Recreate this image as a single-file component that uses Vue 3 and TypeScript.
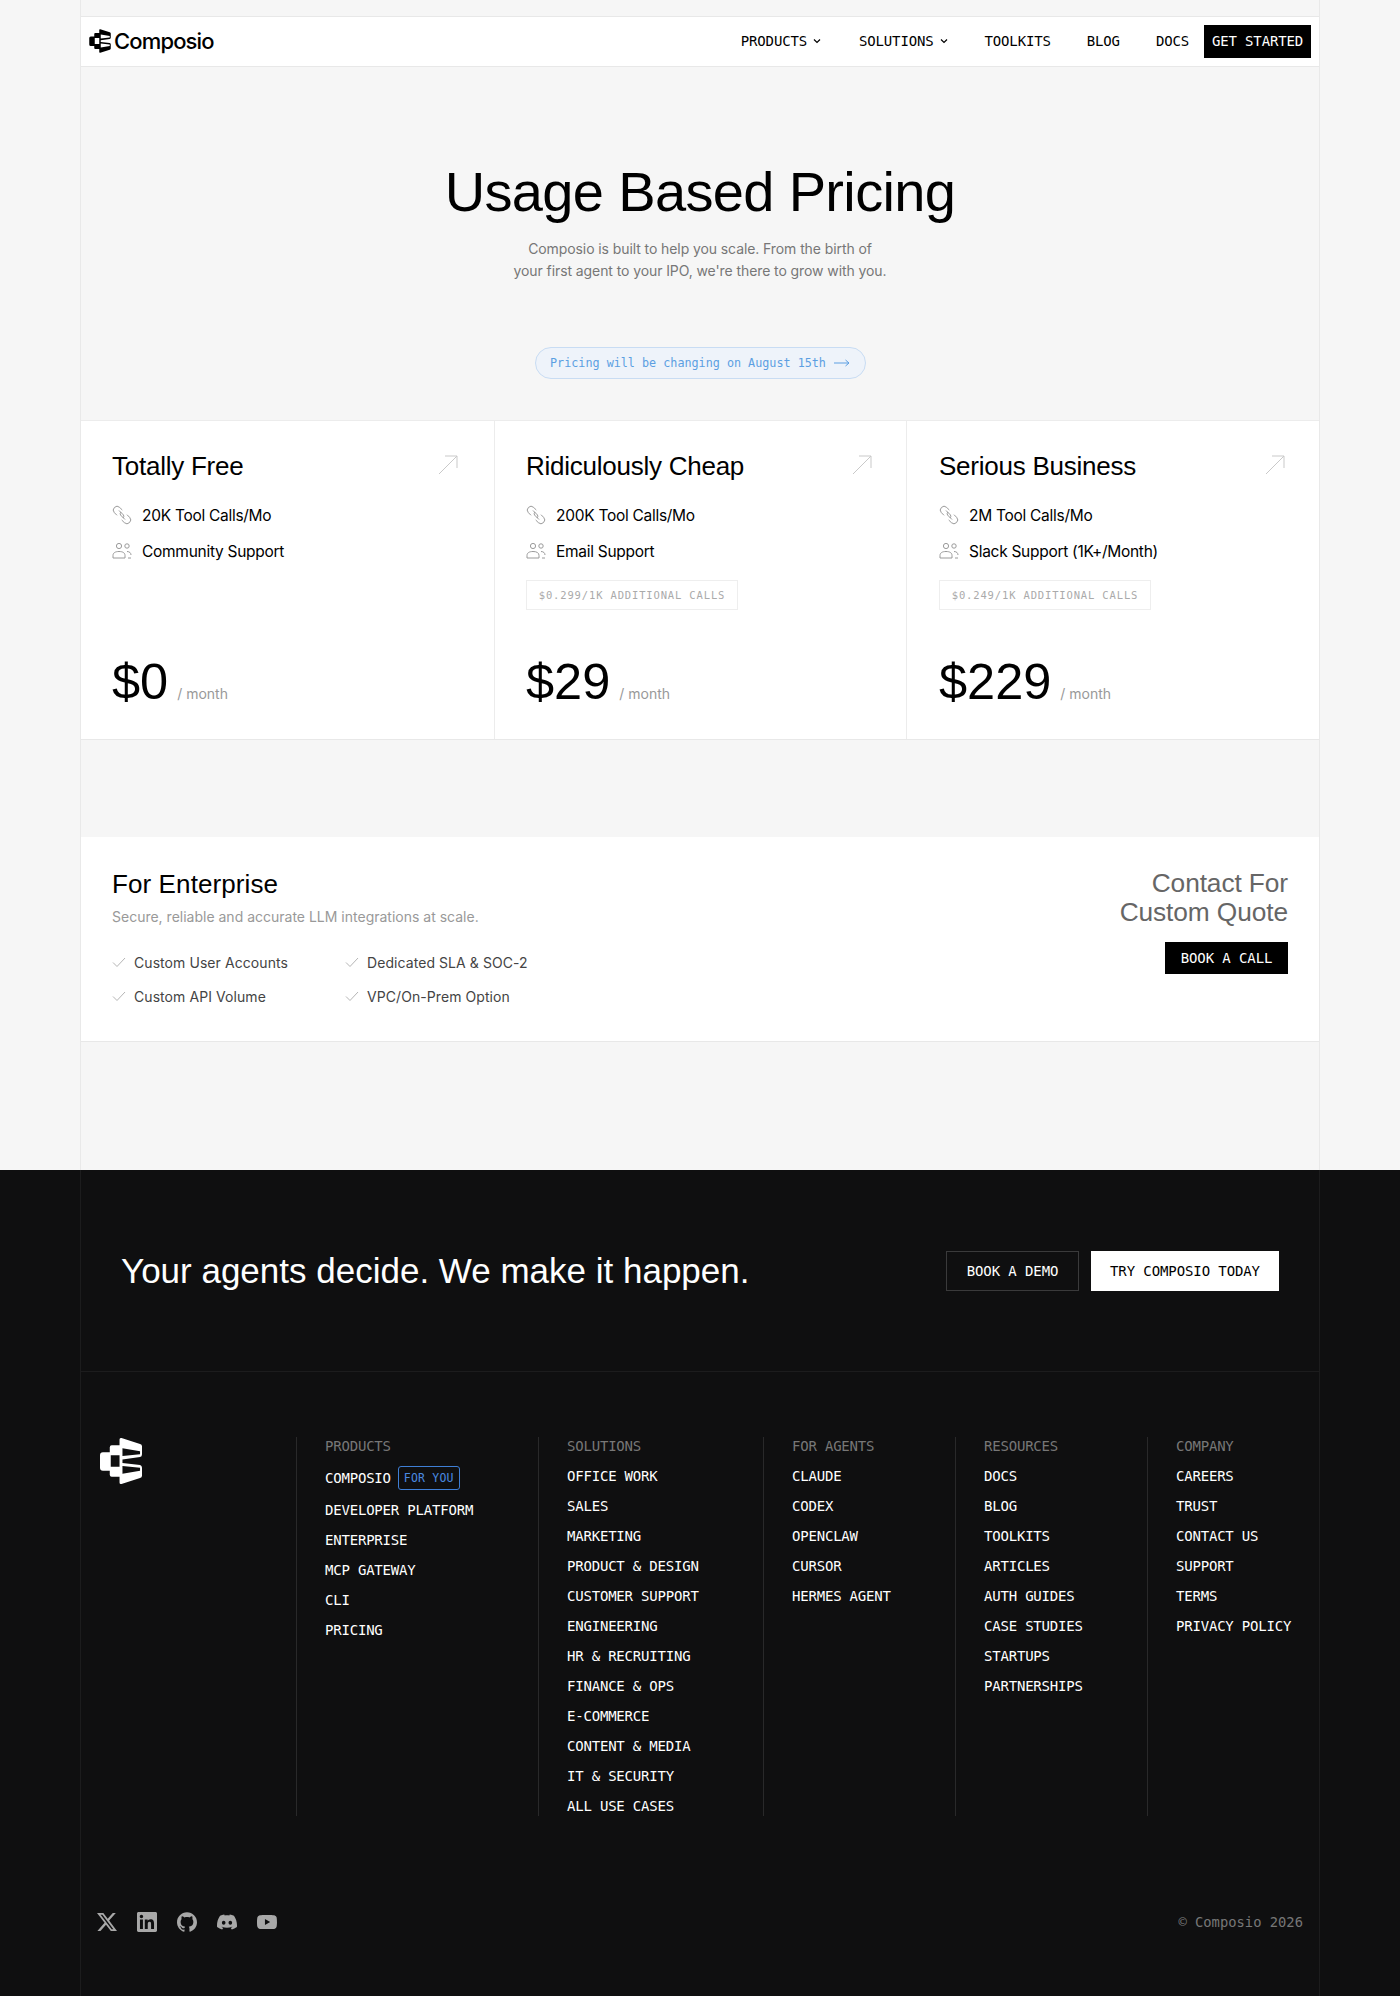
<script setup lang="ts">
interface Plan {
  name: string
  calls: string
  support: string
  extra?: string
  price: string
}

interface FooterColumn {
  title: string
  links: string[]
}

const logoPath =
  'M20 2Q20 0 22 .5L41 6.5Q43 7 43 9L43 17Q43 19.5 41 20L23 22.5V26L41 28Q43 28.5 43 31V39Q43 41 41 41.5L22 47.5Q20 48 20 46V40H12Q10 40 10 38V34H3Q0 34 0 31V18Q0 15 3 15H10V10Q10 8 12 8H20ZM11 18H20V30H11ZM23 11L41 14V17L23 19ZM23 29L41 31V34L23 37Z'

const plans: Plan[] = [
  { name: 'Totally Free', calls: '20K Tool Calls/Mo', support: 'Community Support', price: '$0' },
  {
    name: 'Ridiculously Cheap',
    calls: '200K Tool Calls/Mo',
    support: 'Email Support',
    extra: '$0.299/1K ADDITIONAL CALLS',
    price: '$29',
  },
  {
    name: 'Serious Business',
    calls: '2M Tool Calls/Mo',
    support: 'Slack Support (1K+/Month)',
    extra: '$0.249/1K ADDITIONAL CALLS',
    price: '$229',
  },
]

const enterpriseFeatures = [
  'Custom User Accounts',
  'Dedicated SLA & SOC-2',
  'Custom API Volume',
  'VPC/On-Prem Option',
]

const columns: FooterColumn[] = [
  {
    title: 'SOLUTIONS',
    links: [
      'OFFICE WORK',
      'SALES',
      'MARKETING',
      'PRODUCT & DESIGN',
      'CUSTOMER SUPPORT',
      'ENGINEERING',
      'HR & RECRUITING',
      'FINANCE & OPS',
      'E-COMMERCE',
      'CONTENT & MEDIA',
      'IT & SECURITY',
      'ALL USE CASES',
    ],
  },
  { title: 'FOR AGENTS', links: ['CLAUDE', 'CODEX', 'OPENCLAW', 'CURSOR', 'HERMES AGENT'] },
  {
    title: 'RESOURCES',
    links: ['DOCS', 'BLOG', 'TOOLKITS', 'ARTICLES', 'AUTH GUIDES', 'CASE STUDIES', 'STARTUPS', 'PARTNERSHIPS'],
  },
  { title: 'COMPANY', links: ['CAREERS', 'TRUST', 'CONTACT US', 'SUPPORT', 'TERMS', 'PRIVACY POLICY'] },
]

const productLinks = ['DEVELOPER PLATFORM', 'ENTERPRISE', 'MCP GATEWAY', 'CLI', 'PRICING']

const socials = [
  'M18.901 1.153h3.68l-8.04 9.19L24 22.846h-7.406l-5.8-7.584-6.638 7.584H.474l8.6-9.83L0 1.154h7.594l5.243 6.932ZM17.61 20.644h2.039L6.486 3.24H4.298Z',
  'M20.447 20.452h-3.554v-5.569c0-1.328-.027-3.037-1.852-3.037-1.853 0-2.136 1.445-2.136 2.939v5.667H9.351V9h3.414v1.561h.046c.477-.9 1.637-1.85 3.37-1.85 3.601 0 4.267 2.37 4.267 5.455v6.286zM5.337 7.433c-1.144 0-2.063-.926-2.063-2.065 0-1.138.92-2.063 2.063-2.063 1.14 0 2.064.925 2.064 2.063 0 1.139-.925 2.065-2.064 2.065zm1.782 13.019H3.555V9h3.564v11.452zM22.225 0H1.771C.792 0 0 .774 0 1.729v20.542C0 23.227.792 24 1.771 24h20.451C23.2 24 24 23.227 24 22.271V1.729C24 .774 23.2 0 22.222 0h.003z',
  'M12 .297c-6.63 0-12 5.373-12 12 0 5.303 3.438 9.8 8.205 11.385.6.113.82-.258.82-.577 0-.285-.01-1.04-.015-2.04-3.338.724-4.042-1.61-4.042-1.61C4.422 18.07 3.633 17.7 3.633 17.7c-1.087-.744.084-.729.084-.729 1.205.084 1.838 1.236 1.838 1.236 1.07 1.835 2.809 1.305 3.495.998.108-.776.417-1.305.76-1.605-2.665-.3-5.466-1.332-5.466-5.93 0-1.31.465-2.38 1.235-3.22-.135-.303-.54-1.523.105-3.176 0 0 1.005-.322 3.3 1.23.96-.267 1.98-.399 3-.405 1.02.006 2.04.138 3 .405 2.28-1.552 3.285-1.23 3.285-1.23.645 1.653.24 2.873.12 3.176.765.84 1.23 1.91 1.23 3.22 0 4.61-2.805 5.625-5.475 5.92.42.36.81 1.096.81 2.22 0 1.606-.015 2.896-.015 3.286 0 .315.21.69.825.57C20.565 22.092 24 17.592 24 12.297c0-6.627-5.373-12-12-12',
  'M20.317 4.3698a19.7913 19.7913 0 00-4.8851-1.5152.0741.0741 0 00-.0785.0371c-.211.3753-.4447.8648-.6083 1.2495-1.8447-.2762-3.68-.2762-5.4868 0-.1636-.3933-.4058-.8742-.6177-1.2495a.077.077 0 00-.0785-.037 19.7363 19.7363 0 00-4.8852 1.515.0699.0699 0 00-.0321.0277C.5334 9.0458-.319 13.5799.0992 18.0578a.0824.0824 0 00.0312.0561c2.0528 1.5076 4.0413 2.4228 5.9929 3.0294a.0777.0777 0 00.0842-.0276c.4616-.6304.8731-1.2952 1.226-1.9942a.076.076 0 00-.0416-.1057c-.6528-.2476-1.2743-.5495-1.8722-.8923a.077.077 0 01-.0076-.1277c.1258-.0943.2517-.1923.3718-.2914a.0743.0743 0 01.0776-.0105c3.9278 1.7933 8.18 1.7933 12.0614 0a.0739.0739 0 01.0785.0095c.1202.099.246.1981.3728.2924a.077.077 0 01-.0066.1276 12.2986 12.2986 0 01-1.873.8914.0766.0766 0 00-.0407.1067c.3604.698.7719 1.3628 1.225 1.9932a.076.076 0 00.0842.0286c1.961-.6067 3.9495-1.5219 6.0023-3.0294a.077.077 0 00.0313-.0552c.5004-5.177-.8382-9.6739-3.5485-13.6604a.061.061 0 00-.0312-.0286zM8.02 15.3312c-1.1825 0-2.1569-1.0857-2.1569-2.419 0-1.3332.9555-2.4189 2.157-2.4189 1.2108 0 2.1757 1.0952 2.1568 2.419 0 1.3332-.9555 2.4189-2.1569 2.4189zm7.9748 0c-1.1825 0-2.1569-1.0857-2.1569-2.419 0-1.3332.9554-2.4189 2.1569-2.4189 1.2108 0 2.1757 1.0952 2.1568 2.419 0 1.3332-.946 2.4189-2.1568 2.4189Z',
  'M23.498 6.186a3.016 3.016 0 0 0-2.122-2.136C19.505 3.545 12 3.545 12 3.545s-7.505 0-9.377.505A3.017 3.017 0 0 0 .502 6.186C0 8.07 0 12 0 12s0 3.93.502 5.814a3.016 3.016 0 0 0 2.122 2.136c1.871.505 9.376.505 9.376.505s7.505 0 9.377-.505a3.015 3.015 0 0 0 2.122-2.136C24 15.93 24 12 24 12s0-3.93-.502-5.814zM9.545 15.568V8.432L15.818 12l-6.273 3.568z',
]
</script>

<template>
  <div class="page">
    <div class="frame">
      <header class="nav">
        <div class="brand">
          <svg class="brand-mark" viewBox="0 0 43 48"><path :d="logoPath" fill="#000" fill-rule="evenodd" /></svg>
          <span class="brand-name">Composio</span>
        </div>
        <nav class="nav-links">
          <span class="nav-link">PRODUCTS<svg class="chev" viewBox="0 0 10 10"><path d="M2 3.5 5 6.5 8 3.5" /></svg></span>
          <span class="nav-link">SOLUTIONS<svg class="chev" viewBox="0 0 10 10"><path d="M2 3.5 5 6.5 8 3.5" /></svg></span>
          <span class="nav-link">TOOLKITS</span>
          <span class="nav-link">BLOG</span>
          <span class="nav-link">DOCS</span>
          <span class="nav-cta">GET STARTED</span>
        </nav>
      </header>

      <section class="hero">
        <h1 class="hero-title">Usage Based Pricing</h1>
        <p class="hero-sub">Composio is built to help you scale. From the birth of<br>your first agent to your IPO, we're there to grow with you.</p>
        <div class="notice">
          Pricing will be changing on August 15th
          <svg class="notice-arrow" viewBox="0 0 16 10"><path d="M0 5H15M11.5 2 15 5 11.5 8" /></svg>
        </div>
      </section>

      <section class="plans">
        <article v-for="plan in plans" :key="plan.name" class="plan">
          <div class="plan-head">
            <h2 class="plan-name">{{ plan.name }}</h2>
            <svg class="plan-arrow" viewBox="0 0 20 20"><path d="M1 19 19 1M7 1H19V13" /></svg>
          </div>
          <div class="plan-row">
            <svg class="plan-icon" viewBox="0 0 20 20">
              <path d="M5 10.3 2.35 7.65A3.75 3.75 0 0 1 7.65 2.35L10.3 5" />
              <path d="M15 9.7 17.65 12.35A3.75 3.75 0 0 1 12.35 17.65L9.7 15" />
              <path d="M7 5.5 11.5 10A2.5 2.5 0 0 1 11 13" />
              <path d="M13 14.5 8.5 10A2.5 2.5 0 0 1 9 7" />
            </svg>
            {{ plan.calls }}
          </div>
          <div class="plan-row">
            <svg class="plan-icon" viewBox="0 0 20 20">
              <circle cx="7" cy="5" r="2.6" />
              <circle cx="15" cy="5" r="2.2" />
              <path d="M1 17V14.5C1 12 3 10.5 7 10.5S13 12 13 14.5V17H1Z" />
              <path d="M15 10.5C17.5 10.5 19 12 19 14M16 17H19" />
            </svg>
            {{ plan.support }}
          </div>
          <div v-if="plan.extra" class="plan-extra">{{ plan.extra }}</div>
          <div class="plan-price">
            <span class="price">{{ plan.price }}</span>
            <span class="per">/ month</span>
          </div>
        </article>
      </section>

      <section class="enterprise">
        <div>
          <h2 class="ent-title">For Enterprise</h2>
          <p class="ent-sub">Secure, reliable and accurate LLM integrations at scale.</p>
          <ul class="ent-list">
            <li v-for="item in enterpriseFeatures" :key="item" class="ent-item">
              <svg class="check" viewBox="0 0 14 14"><path d="M1 7.5 5 11.5 13 3" /></svg>
              {{ item }}
            </li>
          </ul>
        </div>
        <div class="ent-side">
          <div class="ent-quote">Contact For<br>Custom Quote</div>
          <span class="ent-btn">BOOK A CALL</span>
        </div>
      </section>
    </div>

    <footer class="footer">
      <div class="footer-frame">
        <div class="cta">
          <h2 class="cta-title">Your agents decide. We make it happen.</h2>
          <div class="cta-actions">
            <span class="btn-ghost">BOOK A DEMO</span>
            <span class="btn-solid">TRY COMPOSIO TODAY</span>
          </div>
        </div>

        <div class="foot-grid">
          <div class="foot-logo">
            <svg class="foot-mark" viewBox="0 0 43 48"><path :d="logoPath" fill="#fff" fill-rule="evenodd" /></svg>
          </div>
          <div class="foot-col">
            <div class="foot-head">PRODUCTS</div>
            <div class="foot-link foot-link-badge">COMPOSIO<span class="badge">FOR YOU</span></div>
            <div v-for="link in productLinks" :key="link" class="foot-link">{{ link }}</div>
          </div>
          <div v-for="col in columns" :key="col.title" class="foot-col">
            <div class="foot-head">{{ col.title }}</div>
            <div v-for="link in col.links" :key="link" class="foot-link">{{ link }}</div>
          </div>
        </div>

        <div class="foot-bottom">
          <div class="socials">
            <svg v-for="d in socials" :key="d" class="social" viewBox="0 0 24 24"><path :d="d" /></svg>
          </div>
          <span class="copyright">© Composio 2026</span>
        </div>
      </div>
    </footer>
  </div>
</template>

<style>
body {
  background: #f6f6f6;
}
</style>

<style scoped>
.page {
  font-family: Inter, "Liberation Sans", sans-serif;
  color: #000;
  background: #f6f6f6;
  height: 1996px;
  display: flex;
  flex-direction: column;
}

h1, h2, p, ul {
  margin: 0;
  padding: 0;
  font-weight: 400;
}

.frame {
  box-sizing: border-box;
  width: 1240px;
  height: 1170px;
  margin: 0 auto;
  padding-top: 16px;
  border-left: 1px solid #e9e9e9;
  border-right: 1px solid #e9e9e9;
}

.nav {
  box-sizing: border-box;
  height: 51px;
  display: flex;
  align-items: center;
  justify-content: space-between;
  padding: 0 8px 1px;
  background: #fff;
  border-top: 1px solid #e8e8e8;
  border-bottom: 1px solid #e8e8e8;
}

.brand {
  display: flex;
  align-items: center;
  gap: 3px;
}

.brand-mark {
  width: 22px;
  height: 24px;
}

.brand-name {
  font-size: 22px;
  font-weight: 500;
  letter-spacing: -0.85px;
}

.nav-links {
  display: flex;
  align-items: center;
  font-family: "DejaVu Sans Mono", monospace;
  font-size: 14px;
  letter-spacing: -0.15px;
}

.nav-link {
  display: flex;
  align-items: center;
  margin-right: 36px;
}

.nav-link:nth-child(1) {
  margin-right: 37px;
}

.nav-link:nth-child(5) {
  margin-right: 15px;
}

.chev {
  width: 10px;
  height: 10px;
  margin-left: 5px;
  fill: none;
  stroke: #000;
  stroke-width: 1.2;
}

.nav-cta {
  height: 33px;
  width: 107px;
  display: flex;
  align-items: center;
  justify-content: center;
  background: #000;
  color: #fff;
}

.hero {
  height: 353px;
  box-sizing: border-box;
  padding-top: 89px;
  display: flex;
  flex-direction: column;
  align-items: center;
}

.hero-title {
  font-family: "Liberation Sans", sans-serif;
  font-size: 56px;
  line-height: 72px;
  letter-spacing: -0.65px;
}

.hero-sub {
  margin-top: 10px;
  font-size: 14px;
  line-height: 22px;
  letter-spacing: -0.09px;
  color: #777;
  text-align: center;
}

.notice {
  box-sizing: border-box;
  height: 32px;
  width: 331px;
  margin-top: 65px;
  display: flex;
  align-items: center;
  justify-content: center;
  gap: 8px;
  border: 1px solid #c8dcf3;
  border-radius: 16px;
  background: #eef3fa;
  color: #5c9fe2;
  font-family: "DejaVu Sans Mono", monospace;
  font-size: 11.75px;
}

.notice-arrow {
  width: 16px;
  height: 10px;
  fill: none;
  stroke: #5c9fe2;
  stroke-width: 1;
}

.plans {
  display: grid;
  grid-template-columns: 413px 412px 1fr;
  height: 320px;
  background: #fff;
  border-top: 1px solid #ececec;
  border-bottom: 1px solid #e8e8e8;
  box-sizing: border-box;
}

.plan {
  display: flex;
  flex-direction: column;
  padding: 28px 34px 29px 31px;
  border-left: 1px solid #ececec;
}

.plan:first-child {
  border-left: 0;
  padding-right: 36px;
}

.plan:last-child {
  padding-left: 32px;
}

.plan-head {
  display: flex;
  justify-content: space-between;
  align-items: flex-start;
  margin-bottom: 14px;
}

.plan-name {
  font-family: "Liberation Sans", sans-serif;
  font-size: 26px;
  line-height: 34px;
  letter-spacing: -0.25px;
}

.plan-arrow {
  width: 20px;
  height: 20px;
  margin-top: 6px;
  fill: none;
  stroke: #c9c9c9;
  stroke-width: 1;
}

.plan-row {
  height: 36px;
  display: flex;
  align-items: center;
  gap: 10px;
  font-size: 15.5px;
  letter-spacing: -0.28px;
}

.plan-icon {
  width: 20px;
  height: 20px;
  fill: none;
  stroke: #9a9a9a;
  stroke-width: 1;
}

.plan-extra {
  box-sizing: border-box;
  align-self: flex-start;
  width: 212px;
  height: 30px;
  margin-top: 11px;
  display: flex;
  align-items: center;
  justify-content: center;
  border: 1px solid #eeeeee;
  font-family: "DejaVu Sans Mono", monospace;
  font-size: 10.5px;
  letter-spacing: 0.85px;
  color: #aaa;
}

.plan-price {
  margin-top: auto;
  display: flex;
  align-items: baseline;
  gap: 9px;
}

.price {
  font-family: "Liberation Sans", sans-serif;
  font-size: 50.5px;
  line-height: 56px;
}

.per {
  font-size: 14px;
  color: #999;
}

.enterprise {
  box-sizing: border-box;
  height: 205px;
  margin-top: 97px;
  padding: 31px 31px 0 31px;
  display: flex;
  justify-content: space-between;
  background: #fff;
  border-bottom: 1px solid #e8e8e8;
}

.ent-title {
  font-family: "Liberation Sans", sans-serif;
  font-size: 26px;
  line-height: 32px;
  letter-spacing: 0.1px;
}

.ent-sub {
  margin-top: 7px;
  font-size: 14px;
  line-height: 20px;
  color: #999;
}

.ent-list {
  list-style: none;
  margin-top: 25px;
  display: grid;
  grid-template-columns: 233px auto;
  row-gap: 14px;
}

.ent-item {
  display: flex;
  align-items: center;
  gap: 8px;
  height: 20px;
  font-size: 14px;
  letter-spacing: 0.07px;
  color: #444;
}

.check {
  width: 14px;
  height: 14px;
  fill: none;
  stroke: #b5b5b5;
  stroke-width: 1;
}

.ent-side {
  display: flex;
  flex-direction: column;
  align-items: flex-end;
  padding-top: 1px;
}

.ent-quote {
  font-family: "Liberation Sans", sans-serif;
  font-size: 26.3px;
  line-height: 28.5px;
  letter-spacing: -0.1px;
  text-align: right;
  color: #666;
}

.ent-btn {
  width: 123px;
  height: 32px;
  margin-top: 16px;
  display: flex;
  align-items: center;
  justify-content: center;
  background: #000;
  color: #fff;
  font-family: "DejaVu Sans Mono", monospace;
  font-size: 14px;
  letter-spacing: -0.1px;
}

.footer {
  flex: 1;
  background: #0f0f10;
  color: #fff;
}

.footer-frame {
  box-sizing: border-box;
  width: 1240px;
  height: 100%;
  margin: 0 auto;
  border-left: 1px solid #1c1c1d;
  border-right: 1px solid #1c1c1d;
}

.cta {
  box-sizing: border-box;
  height: 202px;
  padding: 0 40px;
  display: flex;
  align-items: center;
  justify-content: space-between;
  border-bottom: 1px solid #1c1c1d;
}

.cta-title {
  font-family: "Liberation Sans", sans-serif;
  font-size: 35px;
}

.cta-actions {
  display: flex;
  gap: 12px;
  font-family: "DejaVu Sans Mono", monospace;
  font-size: 14px;
  letter-spacing: -0.1px;
}

.btn-ghost,
.btn-solid {
  box-sizing: border-box;
  height: 40px;
  display: flex;
  align-items: center;
  justify-content: center;
}

.btn-ghost {
  width: 133px;
  border: 1px solid #3a3a3b;
}

.btn-solid {
  width: 188px;
  background: #fff;
  color: #000;
}

.foot-grid {
  display: grid;
  grid-template-columns: 215px 242px 225px 192px 192px 1fr;
  height: 379px;
  margin-top: 65px;
  font-family: "DejaVu Sans Mono", monospace;
}

.foot-logo {
  padding-left: 19px;
}

.foot-mark {
  width: 42px;
  height: 48px;
}

.foot-col {
  box-sizing: border-box;
  padding: 0 0 0 28px;
  border-left: 1px solid #29292a;
  display: flex;
  flex-direction: column;
  gap: 12px;
}

.foot-head {
  height: 18px;
  line-height: 18px;
  font-size: 14px;
  letter-spacing: -0.2px;
  color: #777;
}

.foot-link {
  height: 18px;
  line-height: 18px;
  font-size: 14px;
  letter-spacing: -0.2px;
  white-space: pre;
}

.foot-link-badge {
  height: 22px;
  display: flex;
  align-items: center;
  gap: 7px;
}

.badge {
  box-sizing: border-box;
  height: 24px;
  padding: 0 5px;
  display: flex;
  align-items: center;
  border: 1px solid #3f7fd6;
  border-radius: 3px;
  color: #4a8ae0;
  font-size: 11.5px;
  letter-spacing: 0.2px;
}

.foot-bottom {
  margin-top: 96px;
  padding: 0 16px;
  display: flex;
  align-items: center;
  justify-content: space-between;
}

.socials {
  display: flex;
  gap: 20px;
}

.social {
  width: 20px;
  height: 20px;
  fill: #a8a8a8;
}

.copyright {
  font-family: "DejaVu Sans Mono", monospace;
  font-size: 13.8px;
  color: #777;
}
</style>
